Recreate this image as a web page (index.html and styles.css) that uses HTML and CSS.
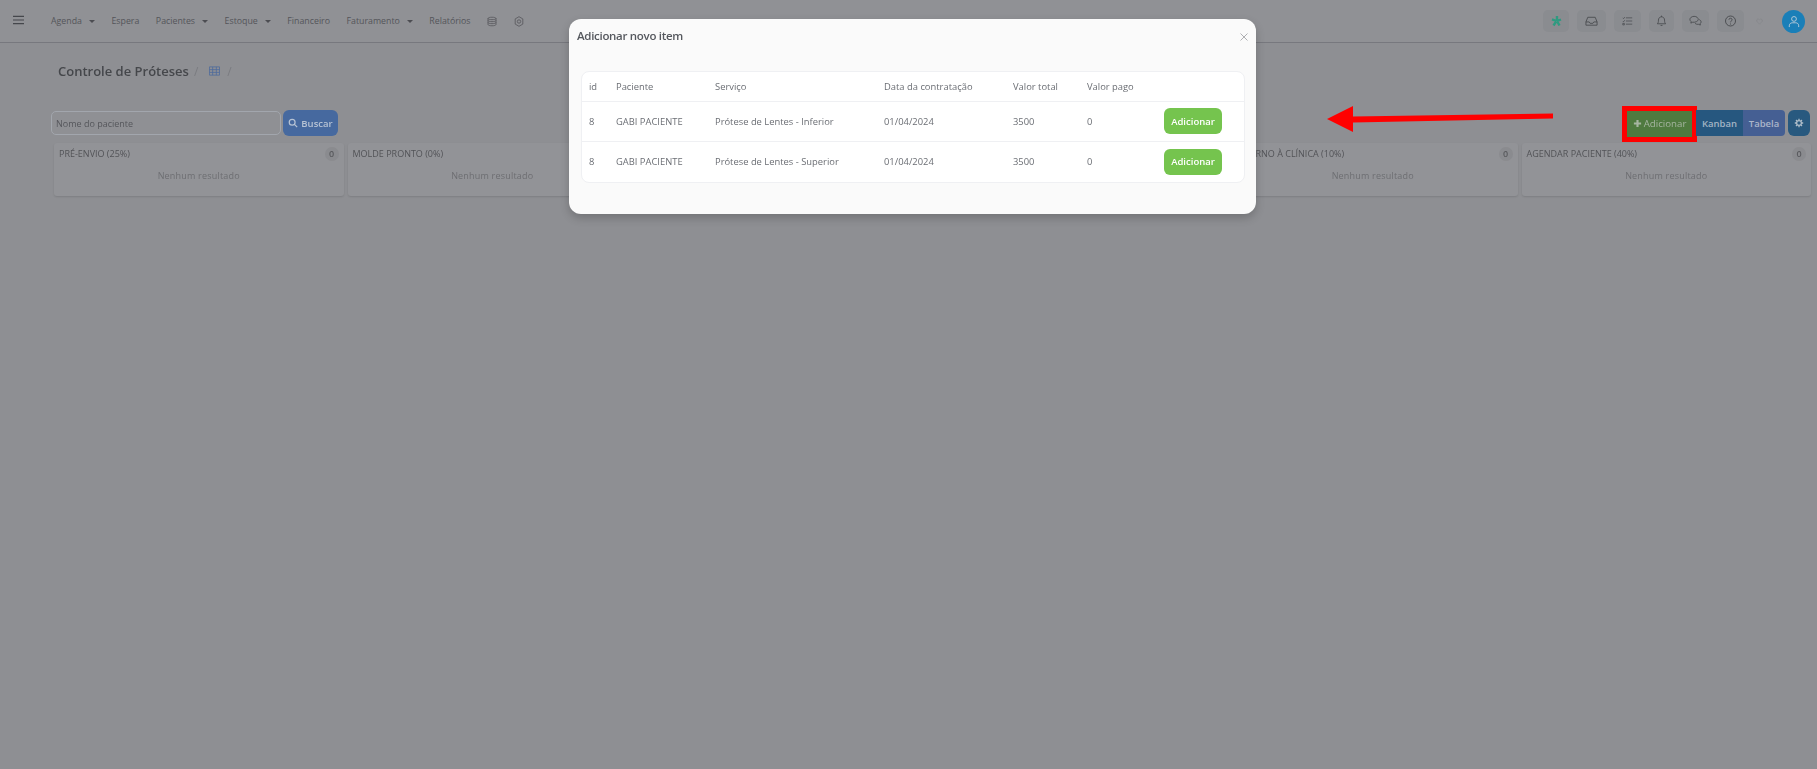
FILE: index.html
```html
<!DOCTYPE html>
<html lang="pt-BR">
<head>
<meta charset="utf-8">
<title>Controle de Próteses</title>
<link rel="stylesheet" href="styles.css">
</head>
<body>
<div class="page">
  <header class="topbar">
    <svg class="burger" viewBox="0 0 12 10"><path d="M0 1h12M0 5h12M0 9h12"/></svg>
    <nav class="menu">
      <a class="menu-item">Agenda<i class="caret"></i></a>
      <a class="menu-item">Espera</a>
      <a class="menu-item">Pacientes<i class="caret"></i></a>
      <a class="menu-item">Estoque<i class="caret"></i></a>
      <a class="menu-item">Financeiro</a>
      <a class="menu-item">Faturamento<i class="caret"></i></a>
      <a class="menu-item">Relatórios</a>
      <svg class="menu-icon" viewBox="0 0 10 11"><path d="M1 2.500C1 .8 9 .8 9 2.500v6c0 1.700-8 1.700-8 0zM1 2.500c0 1.500 8 1.500 8 0M1 4.500c0 1.500 8 1.500 8 0M1 6.500c0 1.500 8 1.500 8 0"/></svg>
      <svg class="menu-icon" viewBox="0 0 10 11"><path d="M5 .7l3.800 2.200v5.200L5 10.300 1.200 8.100V2.900z"/><circle cx="5" cy="5.500" r="1.700"/></svg>
    </nav>
    <div class="actions">
      <span class="action action-star"><svg viewBox="0 0 12 12"><path class="star" d="M6.500 1v5M6.500 6l4-1.500M6.500 6l2.500 4.500M6 6l-3 4.500M6 6L1.500 4.300"/></svg></span>
      <span class="action action-wide"><svg viewBox="0 0 14 12"><path d="M1 7l2-5h8l2 5v3.500H1zM1 7h3.500l1 1.500h3l1-1.500H13"/></svg></span>
      <span class="action action-mid"><svg class="icon-list" viewBox="0 0 14 12"><path d="M5 2h8M5 6h8M5 10h8M1 2l1 1 1.500-2M1 6l1 1 1.500-2M1 9h2v2H1z"/></svg></span>
      <span class="action action-bell"><svg viewBox="0 0 12 13"><path d="M1.500 9.500c1-1 1.200-2 1.200-4C2.700 3.500 4 2 6 2s3.300 1.500 3.300 3.500c0 2 .2 3 1.200 4zM6 .7V2M5 11.300h2"/></svg></span>
      <span class="action action-mid"><svg viewBox="0 0 14 12"><path d="M5.500 1C3 1 1 2.500 1 4.300c0 1 .5 1.700 1.300 2.300L2 8.300l2-1c2.500.5 6-1 6-3C10 2.500 8 1 5.500 1zM11 4.500c1.300.5 2 1.400 2 2.500 0 .8-.4 1.400-1 1.900l.2 1.500-1.800-.8c-1.500.2-3-.2-3.900-1"/></svg></span>
      <span class="action action-mid"><svg viewBox="0 0 12 12"><circle cx="6" cy="6" r="5"/><path d="M4.400 4.700C4.400 2.800 7.600 2.800 7.600 4.700 7.600 6 6 6 6 7.300M6 8.500v1"/></svg></span>
      <svg class="heart" viewBox="0 0 8 8"><path d="M4 7L1 4C-.2 2 2.800.3 4 2 5.200.3 8.200 2 7 4z"/></svg>
      <span class="avatar"><svg viewBox="0 0 14 14"><circle cx="7" cy="4" r="2.800"/><path d="M1.500 13.500v-1.500C1.500 9.500 3.500 8.500 5 8.500h4c1.500 0 3.500 1 3.500 3.500v1.500"/></svg></span>
    </div>
  </header>

  <main class="content">
    <div class="crumbs">
      <h1 class="crumb-title">Controle de Próteses</h1>
      <span class="crumb-sep">/</span>
      <svg class="crumb-icon" viewBox="0 0 12 10"><path d="M.5.500h11v9H.5zM.5 3.500h11M.5 6.500h11M4 .5v9M8 .5v9"/></svg>
      <span class="crumb-sep">/</span>
    </div>

    <div class="toolbar">
      <input class="search-input" type="text" placeholder="Nome do paciente">
      <button class="btn btn-search"><svg viewBox="0 0 12 12"><circle cx="5" cy="5" r="3.500"/><path d="M7.700 7.700L11 11"/></svg>Buscar</button>
      <div class="toolbar-right">
        <button class="btn btn-add"><svg viewBox="0 0 10 10"><path d="M5 1v8M1 5h8"/></svg>Adicionar</button>
        <div class="view-toggle">
          <button class="toggle toggle-on">Kanban</button>
          <button class="toggle toggle-off">Tabela</button>
        </div>
        <button class="btn btn-gear"><svg viewBox="0 0 10 10"><circle cx="5" cy="5" r="2.400"/><path d="M5 .8v1.500M5 7.700v1.500M.8 5h1.500M7.700 5h1.500M2 2l1.100 1.100M6.900 6.900L8 8M2 8l1.100-1.100M6.900 3.100L8 2"/></svg></button>
      </div>
    </div>

    <section class="board">
      <article class="card"><div class="card-head"><span class="card-title">PRÉ-ENVIO (25%)</span><span class="badge">0</span></div><p class="empty">Nenhum resultado</p></article>
      <article class="card"><div class="card-head"><span class="card-title">MOLDE PRONTO (0%)</span><span class="badge">0</span></div><p class="empty">Nenhum resultado</p></article>
      <article class="card"></article>
      <article class="card"></article>
      <article class="card"><div class="card-head"><span class="card-title">RETORNO À CLÍNICA (10%)</span><span class="badge">0</span></div><p class="empty">Nenhum resultado</p></article>
      <article class="card"><div class="card-head"><span class="card-title">AGENDAR PACIENTE (40%)</span><span class="badge">0</span></div><p class="empty">Nenhum resultado</p></article>
    </section>
  </main>
</div>

<div class="modal">
  <div class="modal-head">
    <h2 class="modal-title">Adicionar novo item</h2>
    <svg class="modal-close" viewBox="0 0 8 8"><path d="M.5.500l7 7M7.500.500l-7 7"/></svg>
  </div>
  <div class="table-box">
    <table class="items">
      <thead>
        <tr><th class="c-id">id</th><th class="c-pat">Paciente</th><th class="c-srv">Serviço</th><th class="c-date">Data da contratação</th><th class="c-tot">Valor total</th><th class="c-paid">Valor pago</th><th></th></tr>
      </thead>
      <tbody>
        <tr><td>8</td><td>GABI PACIENTE</td><td>Prótese de Lentes - Inferior</td><td>01/04/2024</td><td>3500</td><td>0</td><td><button class="btn-row">Adicionar</button></td></tr>
        <tr><td>8</td><td>GABI PACIENTE</td><td>Prótese de Lentes - Superior</td><td>01/04/2024</td><td>3500</td><td>0</td><td><button class="btn-row">Adicionar</button></td></tr>
      </tbody>
    </table>
  </div>
</div>

<svg class="arrow" viewBox="0 0 228 28"><path d="M0 14L26 1v10.500l200-3v5L26 17.500V27z"/></svg>
</body>
</html>
```

FILE: styles.css
```css
* { box-sizing: border-box; }
html, body { margin: 0; height: 100%; overflow: hidden; }
body { background: #8e8f93; font-family: "Open Sans", "Noto Sans", sans-serif; color: #505256; }
svg { display: block; fill: none; stroke: currentColor; }

.page { height: 100%; filter: blur(.45px); }

.topbar { height: 43px; display: flex; align-items: center; border-bottom: 1px solid #77787e; background: #909195; padding: 0 12px 0 13px; }
.burger { width: 11px; height: 10px; color: #45474c; stroke-width: 1.2; margin-top: -3px; }
.menu { display: flex; align-items: center; gap: 16.500px; margin-left: 27px; }
.menu-item { font-size: 8.800px; color: #54555a; display: flex; align-items: center; white-space: nowrap; }
.caret { width: 0; height: 0; margin-left: 7px; border-left: 3px solid transparent; border-right: 3px solid transparent; border-top: 3px solid #4c4d52; }
.menu-icon { width: 10px; height: 11px; color: #55565b; stroke-width: .8; }
.actions { margin-left: auto; display: flex; align-items: center; gap: 8px; }
.action { height: 22px; width: 27px; background: #8a8c90; border-radius: 5px; display: flex; align-items: center; justify-content: center; color: #46484c; }
.action svg { width: 13px; height: 12px; stroke-width: .9; }
.action svg.icon-list { width: 11px; height: 10px; }
.action-wide { width: 29px; }
.action-bell { width: 25px; }
.action-star { width: 26px; }
.star { stroke: #2f9a80; stroke-width: 2.400; }
.heart { width: 7px; height: 7px; color: #85868a; margin: 0 11px 0 4px; stroke-width: .8; }
.avatar { width: 23px; height: 23px; border-radius: 50%; background: #1a7fb8; display: flex; align-items: center; justify-content: center; color: #c6d3dc; }
.avatar svg { width: 12px; height: 13px; stroke-width: 1; }

.content { display: block; }
.crumbs { display: flex; align-items: center; height: 22px; margin: 17px 0 0 58px; gap: 5px; }
.crumb-title { margin: 0; font-size: 13px; font-weight: 600; color: #45474b; }
.crumb-sep { font-size: 12px; color: #7b7c80; }
.crumb-icon { width: 11px; height: 10px; margin: 0 2px 0 6px; color: #4f6b9c; stroke-width: .9; }

.toolbar { display: flex; align-items: center; margin: 28px 7px 0 51px; height: 26px; }
.search-input { width: 230px; height: 24px; padding: 0 4px; border: 1px solid #a2a6ad; border-radius: 5px; background: #8f9094; font: 9px "Open Sans", sans-serif; outline: none; }
.search-input::placeholder { color: #55565b; opacity: 1; }
.btn { border: 0; font-family: inherit; font-weight: 600; font-size: 9.500px; height: 26px; display: flex; align-items: center; justify-content: center; padding: 0; }
.btn svg { stroke-width: 1.500; }
.btn-search { width: 55px; margin-left: 2px; background: #46699f; color: #b7c3d4; border-radius: 6px; gap: 3px; }
.btn-search svg { width: 10px; height: 10px; }
.toolbar-right { margin-left: auto; display: flex; align-items: center; }
.btn-add { width: 65px; margin-top: 1px; background: #4f7a3f; color: #a6b5a1; gap: 2px; outline: 5px solid #f00; font-weight: 400; font-size: 9.700px; }
.btn-add svg { width: 9px; height: 9px; stroke-width: 2.400; }
.view-toggle { display: flex; margin-left: 4px; border-radius: 0 4px 4px 0; overflow: hidden; }
.toggle { border: 0; height: 26px; padding: 0; font: 600 9.500px "Open Sans", sans-serif; }
.toggle-on { width: 47px; background: #26577f; color: #a3b4c4; }
.toggle-off { width: 42px; background: #455f93; color: #abb6ca; }
.btn-gear { width: 22px; margin-left: 3px; background: #28597f; color: #aebdc9; border-radius: 6px; }
.btn-gear svg { width: 10px; height: 10px; stroke-width: 1.300; }

.board { display: grid; grid-template-columns: repeat(6, 289.500px); gap: 4px; margin: 7px 0 0 54px; }
.card { height: 53px; background: #929397; border-radius: 3px; box-shadow: 0 1px 2px rgba(0,0,0,.12); padding: 4px 5px; }
.card-head { display: flex; justify-content: space-between; align-items: center; height: 13px; }
.card-title { font-size: 9px; color: #525357; white-space: nowrap; }
.badge { min-width: 14px; height: 14px; border-radius: 50%; background: #8a8b8f; color: #58595d; font-size: 9px; font-weight: 600; text-align: center; line-height: 14px; }
.empty { margin: 9px 0 0; text-align: center; font-size: 9px; color: #6d6e72; letter-spacing: .2px; }

.modal { position: fixed; left: 569px; top: 19px; width: 687px; height: 195px; background: #fafafa; border-radius: 12px; box-shadow: 0 4px 10px rgba(0,0,0,.2); padding: 0 11px 0 12px; filter: blur(.35px); }
.modal-head { position: relative; height: 52px; }
.modal-title { margin: 0 0 0 -4px; padding-top: 9px; font-size: 11.500px; line-height: 15px; font-weight: 600; color: #55585e; letter-spacing: -.3px; }
.modal-close { position: absolute; right: -3px; top: 14px; width: 8px; height: 8px; color: #9a9ca0; stroke-width: .8; }
.table-box { background: #fff; border: 1px solid #eff0f3; border-radius: 8px; overflow: hidden; }
.items { border-collapse: collapse; table-layout: fixed; width: 100%; font-size: 9.400px; color: #6b6e74; }
.items th { font-weight: 400; text-align: left; height: 29px; padding: 0; border-bottom: 1px solid #eff0f3; }
.items td { height: 40px; padding: 0; border-bottom: 1px solid #eff0f3; white-space: nowrap; }
.items tr:last-child td { border-bottom: 0; height: 41px; }
.items th:first-child { padding-left: 7px; }
.items td:first-child { padding-left: 7px; }
.c-id { width: 34px; }
.c-pat { width: 99px; }
.c-srv { width: 169px; }
.c-date { width: 129px; }
.c-tot { width: 74px; }
.c-paid { width: 77px; }
.btn-row { width: 58px; height: 26px; border: 0; border-radius: 6px; background: #75c44e; color: #fff; font: 600 9.500px "Open Sans", sans-serif; padding: 0; }

.arrow { position: fixed; left: 1327px; top: 105px; width: 228px; height: 28px; fill: #f00; stroke: none; }
```
